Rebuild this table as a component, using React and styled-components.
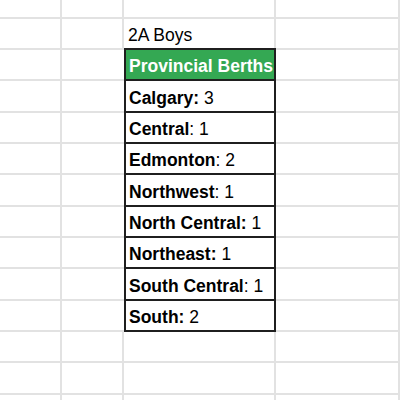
import React from 'react';
import styled, { createGlobalStyle } from 'styled-components';

const GlobalStyle = createGlobalStyle`
	html, body {
		margin: 0;
		padding: 0;
		background: #fff;
	}
	body {
		font-family: 'Liberation Sans', Arial, sans-serif;
		color: #000;
	}
`;

// row heights of the sheet, top row is cut off by the viewport
const rowHeights = [19, 31, 31, 32, 31, 31, 32, 31, 31, 32, 31, 31, 32, 31, 6];

const berths = [
	{ name: 'Calgary:', rest: ' 3' },
	{ name: 'Central', rest: ': 1' },
	{ name: 'Edmonton', rest: ': 2' },
	{ name: 'Northwest', rest: ': 1' },
	{ name: 'North Central:', rest: ' 1' },
	{ name: 'Northeast:', rest: ' 1' },
	{ name: 'South Central', rest: ': 1' },
	{ name: 'South:', rest: ' 2' },
];

const App = () => {
	const rows = rowHeights.map((h, i) => {
		if (i === 1) return { kind: 'title', content: '2A Boys' };
		if (i === 2) return { kind: 'header', content: 'Provincial Berths' };
		const item = berths[i - 3];
		if (item) {
			return {
				kind: 'item',
				content: (
					<>
						<b>{item.name}</b>
						{item.rest}
					</>
				),
			};
		}
		return { kind: 'plain', content: null };
	});

	return (
		<>
			<GlobalStyle />
			<Sheet rows={rowHeights.map((h) => h + 'px').join(' ')}>
				{rows.map((row, i) => {
					const boxed = row.kind === 'header' || row.kind === 'item';
					return (
						<React.Fragment key={i}>
							<Cell />
							<Cell joined={boxed} />
							<Cell kind={row.kind}>{row.content}</Cell>
							<Cell />
						</React.Fragment>
					);
				})}
			</Sheet>
		</>
	);
};

export default App;

const Sheet = styled.div`
	display: grid;
	grid-template-columns: 62px 62px 152px 1fr;
	grid-template-rows: ${(props) => props.rows};
	width: 400px;
	height: 400px;
	overflow: hidden;
`;
const Cell = styled.div`
	display: flex;
	align-items: flex-end;
	min-width: 0;
	padding: 0 4px 3px;
	border-right: 2px solid #e2e2e2;
	border-bottom: 2px solid #e2e2e2;
	font-size: 17.5px;
	line-height: 20px;
	white-space: nowrap;
	overflow: hidden;
	b {
		font-weight: 700;
		white-space: pre;
	}
	${(props) => props.joined && `border-right: none;`}
	${(props) =>
		props.kind === 'header' &&
		`
		margin-top: -2px;
		border: 2px solid #1f1f1f;
		background-color: #34a853;
		color: #fff;
		font-weight: 700;
		padding-left: 3px;
	`}
	${(props) =>
		props.kind === 'item' &&
		`
		border-left: 2px solid #1f1f1f;
		border-right: 2px solid #1f1f1f;
		border-bottom: 2px solid #1f1f1f;
		padding-left: 3px;
		white-space: pre;
	`}
`;
